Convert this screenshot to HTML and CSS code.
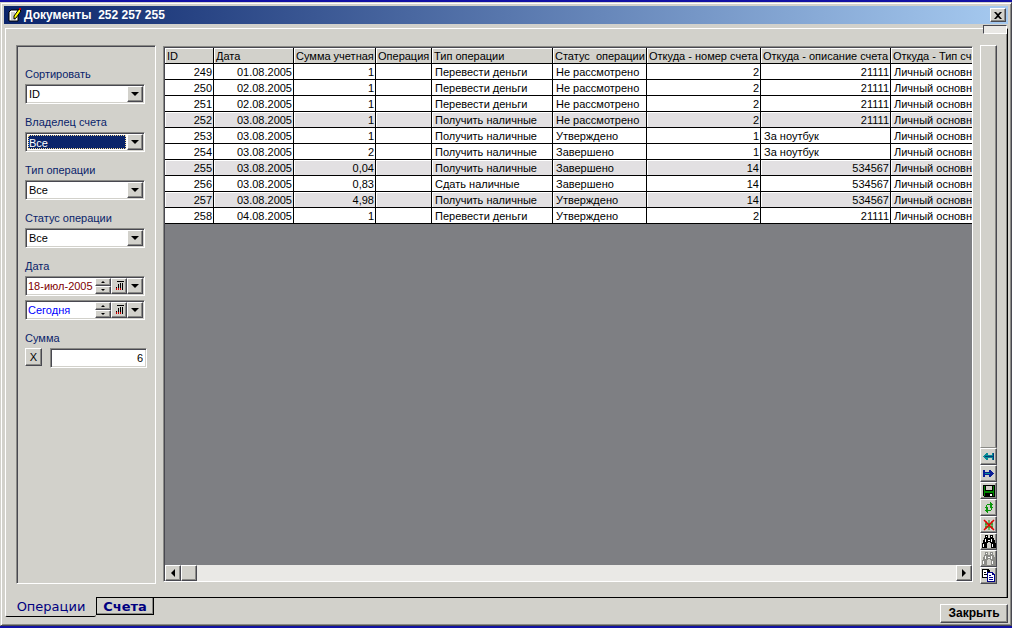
FILE: index.html
```html
<!DOCTYPE html>
<html lang="ru">
<head>
    <meta charset="UTF-8">
    <meta name="viewport" content="width=device-width, initial-scale=1.0">
    <title>Документы</title>
    <link rel="stylesheet" href="styles.css">
</head>
<body>
    <div class="window">
        <header class="titlebar">
            <svg class="title-icon" width="16" height="16" viewBox="0 0 16 16">
                <path d="M5 3h7v11H3V5z" fill="#fff" stroke="#000"/>
                <path d="M5 6h4M5 8h4M5 10h3M5 12h5" stroke="#999"/>
                <path d="M13 2l2 2-5 7-2 1 0-3z" fill="#ff0" stroke="#000"/>
                <path d="M13 1h2v2h-2z" fill="#c00"/>
            </svg>
            <h1>Документы  252 257 255</h1>
            <button type="button" class="close-btn" aria-label="Закрыть окно">
                <svg width="8" height="7" viewBox="0 0 8 7"><path d="M0 0h2l2 2 2-2h2L5 3.500 8 7H6L4 5 2 7H0l3-3.500z"/></svg>
            </button>
        </header>

        <main class="page">
            <div class="grip"></div>

            <form class="filters">
                <div class="field">
                    <label for="sort">Сортировать</label>
                    <div class="combo">
                        <select id="sort"><option>ID</option></select>
                        <span class="arrow"></span>
                    </div>
                </div>
                <div class="field">
                    <label for="owner">Владелец счета</label>
                    <div class="combo selected">
                        <select id="owner"><option>Все</option></select>
                        <span class="arrow"></span>
                    </div>
                </div>
                <div class="field">
                    <label for="type">Тип операции</label>
                    <div class="combo">
                        <select id="type"><option>Все</option></select>
                        <span class="arrow"></span>
                    </div>
                </div>
                <div class="field">
                    <label for="status">Статус операции</label>
                    <div class="combo">
                        <select id="status"><option>Все</option></select>
                        <span class="arrow"></span>
                    </div>
                </div>
                <div class="field">
                    <label for="date-from">Дата</label>
                    <div class="date-box">
                        <input type="text" id="date-from" class="date-from" value="18-июл-2005">
                        <div class="spin">
                            <button type="button" class="up" aria-label="Больше"></button>
                            <button type="button" class="down" aria-label="Меньше"></button>
                        </div>
                        <button type="button" class="small-btn" aria-label="Календарь">
                            <svg width="9" height="10" viewBox="0 0 9 10" shape-rendering="crispEdges"><path d="M2 0h7v1H2zM7 2h1v7H7zM5 2h1v7H5zM3 3h1v6H3zM1 6h1v3H1z"/><path d="M1 7h1v2H1zM3 7h1v2H3zM5 7h1v2H5z" fill="#c00"/></svg>
                        </button>
                        <button type="button" class="small-btn" aria-label="Выбрать дату"><span class="tri"></span></button>
                    </div>
                    <div class="date-box">
                        <input type="text" class="date-to" value="Сегодня" aria-label="Дата по">
                        <div class="spin">
                            <button type="button" class="up" aria-label="Больше"></button>
                            <button type="button" class="down" aria-label="Меньше"></button>
                        </div>
                        <button type="button" class="small-btn" aria-label="Календарь">
                            <svg width="9" height="10" viewBox="0 0 9 10" shape-rendering="crispEdges"><path d="M2 0h7v1H2zM7 2h1v7H7zM5 2h1v7H5zM3 3h1v6H3zM1 6h1v3H1z"/><path d="M1 7h1v2H1zM3 7h1v2H3zM5 7h1v2H5z" fill="#c00"/></svg>
                        </button>
                        <button type="button" class="small-btn" aria-label="Выбрать дату"><span class="tri"></span></button>
                    </div>
                </div>
                <div class="field">
                    <label for="sum">Сумма</label>
                    <div class="sum-row">
                        <button type="button" class="clear-btn">X</button>
                        <input type="text" id="sum" class="sum-input" value="6">
                    </div>
                </div>
            </form>

            <section class="grid">
                <div class="grid-view">
                    <table>
                        <colgroup>
                            <col class="c-id"><col class="c-date"><col class="c-sum"><col class="c-op"><col class="c-type">
                            <col class="c-status"><col class="c-num"><col class="c-desc"><col class="c-kind">
                        </colgroup>
                        <thead>
                            <tr><th>ID</th><th>Дата</th><th>Сумма учетная</th><th>Операция</th><th>Тип операции</th><th>Статус  операции</th><th>Откуда - номер счета</th><th>Откуда - описание счета</th><th>Откуда - Тип счета</th></tr>
                        </thead>
                        <tbody>
                            <tr><td class="num">249</td><td class="num">01.08.2005</td><td class="num">1</td><td></td><td>Перевести деньги</td><td>Не рассмотрено</td><td class="num">2</td><td class="num">21111</td><td>Личный основной</td></tr>
                            <tr><td class="num">250</td><td class="num">02.08.2005</td><td class="num">1</td><td></td><td>Перевести деньги</td><td>Не рассмотрено</td><td class="num">2</td><td class="num">21111</td><td>Личный основной</td></tr>
                            <tr><td class="num">251</td><td class="num">02.08.2005</td><td class="num">1</td><td></td><td>Перевести деньги</td><td>Не рассмотрено</td><td class="num">2</td><td class="num">21111</td><td>Личный основной</td></tr>
                            <tr class="marked"><td class="num">252</td><td class="num">03.08.2005</td><td class="num">1</td><td></td><td>Получить наличные</td><td>Не рассмотрено</td><td class="num">2</td><td class="num">21111</td><td>Личный основной</td></tr>
                            <tr><td class="num">253</td><td class="num">03.08.2005</td><td class="num">1</td><td></td><td>Получить наличные</td><td>Утверждено</td><td class="num">1</td><td>За ноутбук</td><td>Личный основной</td></tr>
                            <tr><td class="num">254</td><td class="num">03.08.2005</td><td class="num">2</td><td></td><td>Получить наличные</td><td>Завершено</td><td class="num">1</td><td>За ноутбук</td><td>Личный основной</td></tr>
                            <tr class="marked"><td class="num">255</td><td class="num">03.08.2005</td><td class="num">0,04</td><td></td><td>Получить наличные</td><td>Завершено</td><td class="num">14</td><td class="num">534567</td><td>Личный основной</td></tr>
                            <tr><td class="num">256</td><td class="num">03.08.2005</td><td class="num">0,83</td><td></td><td>Сдать наличные</td><td>Завершено</td><td class="num">14</td><td class="num">534567</td><td>Личный основной</td></tr>
                            <tr class="marked"><td class="num">257</td><td class="num">03.08.2005</td><td class="num">4,98</td><td></td><td>Получить наличные</td><td>Утверждено</td><td class="num">14</td><td class="num">534567</td><td>Личный основной</td></tr>
                            <tr><td class="num">258</td><td class="num">04.08.2005</td><td class="num">1</td><td></td><td>Перевести деньги</td><td>Утверждено</td><td class="num">2</td><td class="num">21111</td><td>Личный основной</td></tr>
                        </tbody>
                    </table>
                </div>
                <div class="scrollbar">
                    <button type="button" aria-label="Влево"><svg width="4" height="8" viewBox="0 0 4 8"><path d="M4 0v8L0 4z"/></svg></button>
                    <button type="button" aria-label="Прокрутка"></button>
                    <span class="track"></span>
                    <button type="button" aria-label="Вправо"><svg width="4" height="8" viewBox="0 0 4 8"><path d="M0 0v8l4-4z"/></svg></button>
                </div>
            </section>

            <aside class="toolbar">
                <div class="toolbar-blank"></div>
                <button type="button" aria-label="Назад">
                    <svg width="12" height="12" viewBox="0 0 12 12" shape-rendering="crispEdges"><path d="M0 5h1V4h1V3h1V2h2v2h4V2h2v7H9V7H5v2H3V8H2V7H1V6H0z" fill="#0a8c96"/><path d="M2 5h9v1H2zM10 2h1v7h-1z" fill="#003c78"/></svg>
                </button>
                <button type="button" aria-label="Вперед">
                    <svg width="12" height="12" viewBox="0 0 12 12" shape-rendering="crispEdges"><path d="M11 5h-1V4H9V3H8V2H6v2H2V2H0v7h2V7h4v2h2V8h1V7h1V6h1z" fill="#0a1e96"/><path d="M2 5h5v1H2z" fill="#0a9696"/></svg>
                </button>
                <button type="button" aria-label="Сохранить">
                    <svg width="12" height="12" viewBox="0 0 12 12" shape-rendering="crispEdges"><path d="M0 0h12v12H1L0 11z"/><path d="M1 1h1v5h8V1h1v10h-1V8H2v3H1z" fill="#080"/><path d="M3 1h6v4H3z" fill="#d4d0c8"/><path d="M7 9h2v2H7z" fill="#fff"/></svg>
                </button>
                <button type="button" aria-label="Обновить">
                    <svg width="12" height="12" viewBox="0 0 12 12" shape-rendering="crispEdges"><path d="M4 2h3V0h1v1h1v1h1v1H9v1H8v1H7V3H4v2h1v1H4v1H3V6H2V5h1V3h1zM8 9H5v2H4v-1H3V9H2V8h1V7h1V6h1v2h3V6H7V5h1V4h1v1h1v1H9v2H8z" fill="#0a960a"/></svg>
                </button>
                <button type="button" aria-label="Отменить">
                    <svg width="12" height="12" viewBox="0 0 12 12"><path d="M3 2v8M6 1v10M9 2v8M2 5h8M2 8h8" stroke="#0a960a"/><path d="M1 1l10 10M11 1L1 11" stroke="#e60000" stroke-width="1.500"/></svg>
                </button>
                <button type="button" aria-label="Найти">
                    <svg width="14" height="13" viewBox="0 0 14 13" shape-rendering="crispEdges"><path d="M3 0h3v3h2V0h3v3h1v2h1v3h1v5H9V8H8V7H6v1H5v5H0V8h1V5h1V3h1z"/><path d="M4 1h1v1H4zM9 1h1v1H9zM3 4h1v3H3zM9 4h1v3H9zM1 9h1v3H1zM10 9h1v3h-1zM6 5h2v1H6z" fill="#fff"/></svg>
                </button>
                <button type="button" aria-label="Найти далее" disabled>
                    <svg width="14" height="13" viewBox="0 0 14 13" shape-rendering="crispEdges"><path d="M3 0h3v3h2V0h3v3h1v2h1v3h1v5H9V8H8V7H6v1H5v5H0V8h1V5h1V3h1z" fill="#8c8c88"/><path d="M4 1h1v1H4zM9 1h1v1H9zM3 4h1v3H3zM9 4h1v3H9zM1 9h1v3H1zM10 9h1v3h-1zM6 5h2v1H6z" fill="#fff"/></svg>
                </button>
                <button type="button" aria-label="Копировать">
                    <svg width="13" height="13" viewBox="0 0 13 13" shape-rendering="crispEdges"><path d="M0 0h6l2 2v7H0z"/><path d="M1 1h4v2h2v5H1z" fill="#fff"/><path d="M2 3h2v1H2zM2 5h3v1H2z"/><path d="M5 3h5l3 3v7H5z" fill="#008"/><path d="M6 4h4v2h2v6H6z" fill="#fff"/><path d="M7 6h2v1H7zM7 8h4v1H7zM7 10h4v1H7z" fill="#008"/></svg>
                </button>
            </aside>
        </main>

        <footer class="bottom">
            <button type="button" class="tab active">Операции</button>
            <button type="button" class="tab">Счета</button>
            <div class="actions">
                <button type="button" class="main-btn">Закрыть</button>
            </div>
        </footer>
    </div>
</body>
</html>
```
FILE: styles.css
```css
* {
    box-sizing: border-box;
}
body {
    margin: 0;
    padding: 2px 0;
    min-height: 100vh;
    display: flex;
    flex-direction: column;
    background-color: #1212a4;
    font-family: "Liberation Sans", Arial, sans-serif;
    font-size: 11px;
    line-height: 15px;
    color: #000;
}
button, input, select {
    font: inherit;
    color: inherit;
    margin: 0;
    padding: 0;
    border-radius: 0;
}
button {
    display: flex;
    align-items: center;
    justify-content: center;
    background-color: #d2d1cb;
    border: 1px solid;
    border-color: #fff #484850 #484850 #fff;
    box-shadow: inset -1px -1px #8a8a86;
}
.window {
    flex: 1;
    display: flex;
    flex-direction: column;
    background-color: #d2d1cb;
    border: 1px solid;
    border-color: #d2d1cb #484850 #484850 #d2d1cb;
    box-shadow: inset 1px 1px #fff, inset -1px -1px #8a8a86;
    padding: 3px 3px 0;
}

/* Title bar */
.titlebar {
    display: flex;
    align-items: center;
    height: 18px;
    padding: 0 2px;
    background: linear-gradient(to right, #0a246a, #a6caf0);
}
.titlebar h1 {
    flex: 1;
    margin: 0 0 0 2px;
    font-size: 12px;
    color: #fff;
    white-space: pre;
}
.close-btn {
    width: 16px;
    height: 14px;
}

/* Page with the filters, the grid and the toolbar */
.page {
    position: relative;
    flex: 1;
    display: flex;
    margin: 4px 0 0 1px;
    padding: 16px 10px 13px 10px;
    border: solid;
    border-width: 1px 1px 0;
    border-color: #fff #000 #000 #fff;
    box-shadow: inset -1px 0 #8a8a86;
}
.grip {
    position: absolute;
    top: -4px;
    right: 0;
    width: 24px;
    height: 9px;
    background-color: #e9e8e5;
    border: 1px solid;
    border-color: #484850 #fff #fff #484850;
}
.filters {
    display: flex;
    flex-direction: column;
    gap: 10px;
    width: 140px;
    margin: 0 7px 0 0;
    padding: 20px 8px 0 8px;
    border: 1px solid;
    border-color: #8a8a86 #fff #fff #8a8a86;
    box-shadow: inset 1px 1px #484850;
}
.field label {
    display: block;
    height: 18px;
    line-height: 17px;
    color: #0a246a;
}
.combo, .date-box, .sum-input {
    height: 20px;
    background-color: #fff;
    border: 1px solid;
    border-color: #8a8a86 #fff #fff #8a8a86;
    box-shadow: inset 1px 1px #484850, inset -1px -1px #d2d1cb;
}
.combo {
    display: grid;
    grid-template-rows: 100%;
    padding: 1px;
    width: 120px;
}
.combo select {
    grid-area: 1 / 1;
    min-height: 0;
    appearance: none;
    border: 1px solid transparent;
    background: none;
    padding: 0 1px;
    outline: none;
}
.combo .arrow {
    grid-area: 1 / 1;
    justify-self: end;
    width: 16px;
    pointer-events: none;
    display: flex;
    align-items: center;
    justify-content: center;
    background-color: #d2d1cb;
    border: 1px solid;
    border-color: #fff #484850 #484850 #fff;
    box-shadow: inset -1px -1px #8a8a86;
}
.arrow::before, .tri {
    content: "";
    border: 4px solid transparent;
    border-top-color: #000;
    border-bottom: 0;
}
.selected select {
    margin: 1px 17px 1px 1px;
    padding: 0;
    color: #fff;
    background-color: #0a246a;
    border: 1px dotted #f5db95;
}
.date-box {
    display: flex;
    width: 120px;
    padding: 1px;
}
.date-box + .date-box {
    margin-top: 4px;
}
.date-box input {
    flex: 1;
    min-width: 0;
    padding-left: 1px;
    border: 0;
    background: none;
}
.date-box .date-from {
    color: #800000;
}
.date-box .date-to {
    color: #00f;
}
.spin {
    display: flex;
    flex-direction: column;
    width: 16px;
}
.spin button {
    flex: 1;
}
.up::before, .down::before {
    content: "";
    border: 2px solid transparent;
}
.up::before {
    border-top: 0;
    border-bottom-color: #000;
}
.down::before {
    border-bottom: 0;
    border-top-color: #000;
}
.small-btn {
    width: 16px;
}
.sum-row {
    display: flex;
    justify-content: space-between;
}
.clear-btn {
    width: 17px;
    height: 18px;
}
.sum-input {
    width: 97px;
    padding: 0 3px;
    text-align: right;
}

/* Grid */
.grid {
    flex: 1;
    min-width: 0;
    display: flex;
    flex-direction: column;
    margin: 1px 7px 2px 0;
    border: 1px solid;
    border-color: #8a8a86 #fff #fff #8a8a86;
    box-shadow: inset 1px 1px #484850;
    padding: 1px 0 0 1px;
}
.grid-view {
    flex: 1;
    overflow: hidden;
    background-color: #7e7f83;
}
table {
    width: 855px;
    table-layout: fixed;
    border-collapse: separate;
    border-spacing: 0;
}
.c-id { width: 49px; }
.c-date { width: 80px; }
.c-sum { width: 82px; }
.c-op { width: 56px; }
.c-type { width: 121px; }
.c-status { width: 94px; }
.c-num { width: 114px; }
.c-desc { width: 130px; }
.c-kind { width: 129px; }
th, td {
    height: 16px;
    padding: 1px 1px 0 3px;
    border-right: 1px solid #000;
    border-bottom: 1px solid #000;
    background-color: #fff;
    font-weight: normal;
    line-height: 14px;
    text-align: left;
    white-space: pre;
    overflow: hidden;
}
th {
    padding: 1px 0 0 2px;
    background-color: #d2d1cb;
    box-shadow: inset 1px 1px #fff;
}
.marked td {
    background-color: #e2e0e2;
    box-shadow: inset 1px 1px #fff;
}
.num {
    text-align: right;
}
.scrollbar {
    display: flex;
    height: 16px;
    background-color: #eae9e6;
}
.scrollbar button {
    width: 16px;
}
.track {
    flex: 1;
}

/* Right toolbar */
.toolbar {
    display: flex;
    flex-direction: column;
    width: 17px;
}
.toolbar-blank {
    flex: 1;
    border: 1px solid;
    border-color: #fff #484850 #8a8a86 #fff;
    box-shadow: inset -1px 0 #8a8a86;
}
.toolbar button {
    height: 17px;
}
.toolbar svg {
    flex: none;
}

/* Tabs and the close button */
.bottom {
    display: flex;
    align-items: flex-start;
    margin-left: 1px;
    height: 28px;
}
.tab {
    width: 58px;
    height: 18px;
    border-color: #000;
    font: bold 13px "DejaVu Sans", Verdana, sans-serif;
    color: #000080;
}
.tab.active {
    width: 91px;
    height: 20px;
    border-width: 0 0 1px 1px;
    border-left-color: #fff;
    border-radius: 0 0 2px 2px;
    box-shadow: none;
    font-weight: normal;
}
.actions {
    flex: 1;
    display: flex;
    justify-content: flex-end;
    padding-top: 6px;
    border-top: 1px solid #000;
}
.main-btn {
    width: 68px;
    height: 19px;
    font-size: 12px;
    font-weight: bold;
}
```
